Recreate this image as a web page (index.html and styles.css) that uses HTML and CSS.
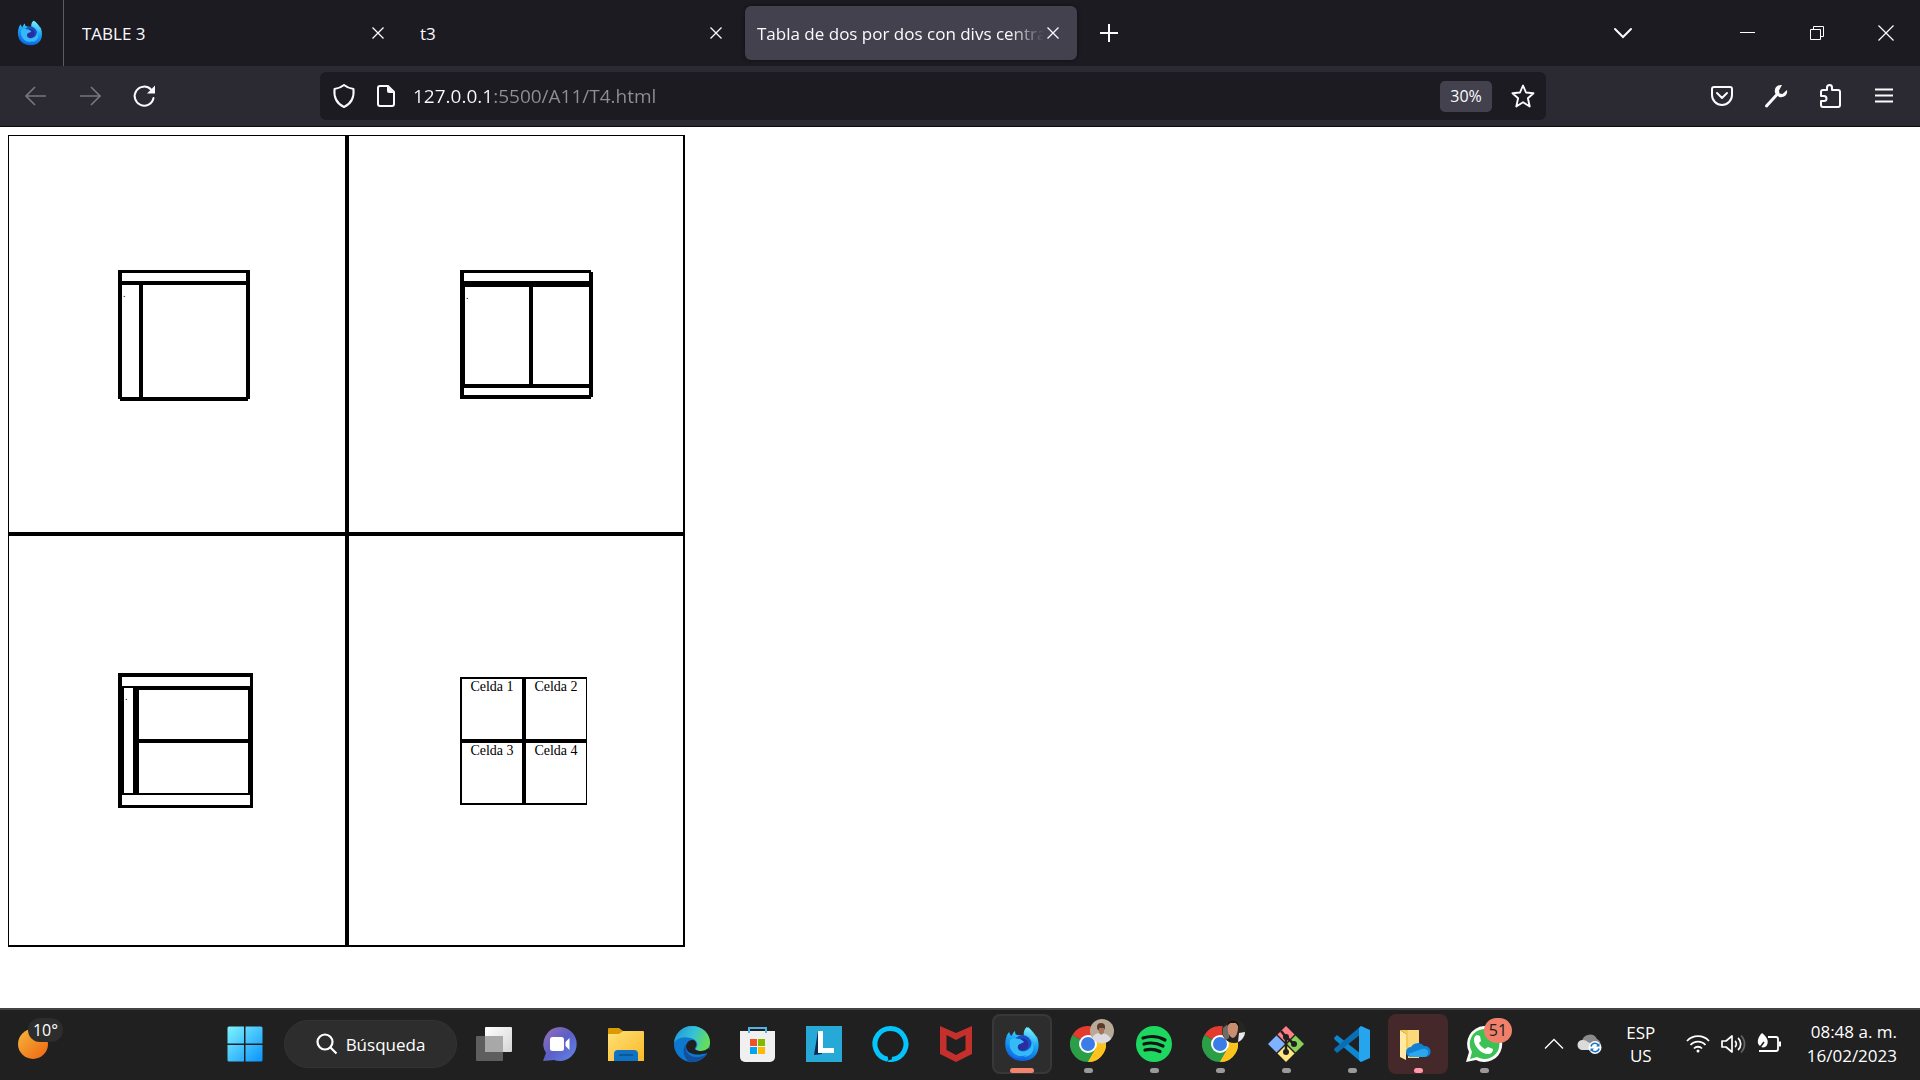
FILE: index.html
```html
<!DOCTYPE html>
<html lang="es">
<head>
<meta charset="utf-8">
<title>Tabla de dos por dos con divs centrados</title>
<link rel="stylesheet" href="styles.css">
</head>
<body>
<svg class="defs" aria-hidden="true">
  <defs>
    <linearGradient id="fxBody" x1=".7" y1="0" x2=".4" y2="1"><stop offset="0" stop-color="#5df0fb"/><stop offset=".45" stop-color="#1ba5f7"/><stop offset="1" stop-color="#0a5ede"/></linearGradient>
    <linearGradient id="fxFlame" x1=".5" y1="0" x2=".3" y2="1"><stop offset="0" stop-color="#7df6fb"/><stop offset="1" stop-color="#1596f4"/></linearGradient>
    <linearGradient id="winG" x1="0" y1="0" x2="1" y2="1"><stop offset="0" stop-color="#7ff3ff"/><stop offset="1" stop-color="#0a93fb"/></linearGradient>
    <linearGradient id="moonG" x1="0" y1="0" x2="1" y2="1"><stop offset="0" stop-color="#f6b73c"/><stop offset="1" stop-color="#ee6410"/></linearGradient>
    <linearGradient id="chatG" x1="0" y1="0" x2="1" y2="1"><stop offset="0" stop-color="#9a6fb5"/><stop offset=".5" stop-color="#5b5fc7"/><stop offset="1" stop-color="#6288e8"/></linearGradient>
    <linearGradient id="foldG" x1="0" y1="0" x2="1" y2="1"><stop offset="0" stop-color="#ffe07a"/><stop offset="1" stop-color="#fbb924"/></linearGradient>
    <linearGradient id="edgeTop" x1="0" y1=".3" x2="1" y2=".6"><stop offset="0" stop-color="#2397d8"/><stop offset=".5" stop-color="#35c3d6"/><stop offset="1" stop-color="#6be04a"/></linearGradient>
    <linearGradient id="viewG" x1="0" y1="0" x2="1" y2="1"><stop offset="0" stop-color="#fff"/><stop offset="1" stop-color="#d5d5d5"/></linearGradient>
    <symbol id="firefox" viewBox="0 0 36 36">
      <path fill="url(#fxBody)" d="M3 9l2-3 2 4c1 0 2-4 4-5 0 3 1 4 3 4l8 1c2 0 1-5 2-9 5 4 7 8 9 10 4 10 1 24-14 24C5 35-1 24 2 12z"/>
      <path fill="url(#fxFlame)" d="M20 10c-1-4 1-8 3-9 3 4 6 5 8 10 2 4 1 8-1 10 0-5-3-9-10-11z"/>
      <circle cx="18.500" cy="18" r="9" fill="#174fc9"/>
      <circle cx="18.500" cy="18.500" r="6" fill="#2b2d9e"/>
      <path fill="#35baf8" d="M6 14c4-3 7-1 10-1 2 1 3 2 4 3-2 2-5 1-6 4-1 4 3 6 7 5 5-1 7-6 7-9 4 7 0 15-9 15C9 31 4 22 6 14z"/>
      <path fill="#1677ec" d="M3 19c4 10 13 13 20 10-7 6-18 4-20-10z"/>
    </symbol>
    <symbol id="close" viewBox="0 0 14 14"><path d="M1.500 1.500l11 11M12.500 1.500l-11 11" fill="none" stroke="#fbfbfe" stroke-width="1.300"/></symbol>
    <symbol id="chrome" viewBox="0 0 36 36">
      <path fill="#e33b2e" d="M18 18L2.400 9A18 18 0 0 1 33.600 9z"/>
      <path fill="#fcc31e" d="M18 18L33.600 9A18 18 0 0 1 18 36z"/>
      <path fill="#2b9e48" d="M18 18l7.800 4.500L18 36A18 18 0 0 1 2.400 9z"/>
      <path fill="#fcc31e" d="M18 9h15.600A18 18 0 0 1 18 36l7.800-13.500z"/>
      <circle cx="18" cy="18" r="9" fill="#fff"/><circle cx="18" cy="18" r="7" fill="#3a7de8"/>
    </symbol>
  </defs>
</svg>

<header class="browser">
  <div class="tabstrip">
    <span class="brand"><svg width="26" height="26" aria-hidden="true"><use href="#firefox"/></svg></span>
    <div class="tab"><button class="tab-title">TABLE 3</button><button class="tab-close" aria-label="Cerrar TABLE 3"><svg width="14" height="14"><use href="#close"/></svg></button></div>
    <div class="tab"><button class="tab-title">t3</button><button class="tab-close" aria-label="Cerrar t3"><svg width="14" height="14"><use href="#close"/></svg></button></div>
    <div class="tab tab-active"><button class="tab-title">Tabla de dos por dos con divs centrados</button><button class="tab-close" aria-label="Cerrar pestaña"><svg width="14" height="14"><use href="#close"/></svg></button></div>
    <button class="new-tab" aria-label="Nueva pestaña"><svg width="18" height="18" viewBox="0 0 18 18"><path d="M9 0v18M0 9h18" stroke="#fbfbfe" stroke-width="2"/></svg></button>
    <button class="all-tabs" aria-label="Listar pestañas"><svg width="20" height="12" viewBox="0 0 20 12"><path d="M2 2l8 8 8-8" fill="none" stroke="#fbfbfe" stroke-width="2" stroke-linecap="round"/></svg></button>
    <div class="window-controls">
      <button aria-label="Minimizar"><svg width="16" height="16" viewBox="0 0 16 16"><path d="M0 7.500h15" stroke="#fff"/></svg></button>
      <button aria-label="Restaurar"><svg width="16" height="16" viewBox="0 0 16 16" fill="none" stroke="#fff"><path d="M1.500 4.500h10v10h-10zM4.500 4.500v-3h10v10h-3"/></svg></button>
      <button aria-label="Cerrar"><svg width="16" height="16" viewBox="0 0 16 16"><path d="M.5.500l15 15M15.500.500l-15 15" stroke="#fff" stroke-width="1.200"/></svg></button>
    </div>
  </div>
  <div class="toolbar">
    <div class="nav">
      <button aria-label="Atrás"><svg width="24" height="24" viewBox="0 0 24 24"><path d="M22 12H2M11 3l-9 9 9 9" fill="none" stroke="#77767f" stroke-width="1.700"/></svg></button>
      <button aria-label="Adelante"><svg width="24" height="24" viewBox="0 0 24 24"><path d="M2 12h20M13 3l9 9-9 9" fill="none" stroke="#77767f" stroke-width="1.700"/></svg></button>
      <button aria-label="Recargar"><svg width="24" height="24" viewBox="0 0 24 24"><path d="M19 5.500A9.500 9.500 0 1 0 21.500 14" fill="none" stroke="#fbfbfe" stroke-width="2" stroke-linecap="round"/><path d="M23 1.500v8h-8z" fill="#fbfbfe"/></svg></button>
    </div>
    <div class="urlbar">
      <svg width="24" height="26" viewBox="0 0 24 26" aria-hidden="true"><path d="M12 2c3 2.500 6 3.500 9.500 4 .8 8-2 14.500-9.500 18C4.500 20.500 1.700 14 2.500 6 6 5.500 9 4.500 12 2z" fill="none" stroke="#fbfbfe" stroke-width="2" stroke-linejoin="round"/></svg>
      <svg width="20" height="24" viewBox="0 0 20 24" aria-hidden="true"><path d="M4 2h8l6 6v12a2 2 0 0 1-2 2H4a2 2 0 0 1-2-2V4a2 2 0 0 1 2-2z" fill="none" stroke="#fbfbfe" stroke-width="2"/><path d="M11 2l7 7h-5a2 2 0 0 1-2-2z" fill="#fbfbfe"/></svg>
      <input class="url" type="text" aria-label="Dirección" value="127.0.0.1:5500/A11/T4.html">
      <button class="zoom-level">30%</button>
      <button class="star" aria-label="Marcador"><svg width="26" height="26" viewBox="0 0 26 26"><path d="M13 2.500l3 7 7.500.700-5.600 5 1.800 8.300L13 19.300l-6.700 4.200 1.800-8.300-5.600-5 7.500-.7z" fill="none" stroke="#fbfbfe" stroke-width="1.900" stroke-linejoin="round"/></svg></button>
    </div>
    <div class="tools">
      <button aria-label="Pocket"><svg width="24" height="24" viewBox="0 0 24 24" fill="none" stroke="#fbfbfe" stroke-width="2" stroke-linecap="round" stroke-linejoin="round"><path d="M4 3h16a2 2 0 0 1 2 2v6a10 10 0 0 1-20 0V5a2 2 0 0 1 2-2zM7 9l5 5 5-5"/></svg></button>
      <button aria-label="Herramientas"><svg width="24" height="24" viewBox="0 0 24 24"><path d="M2.500 22L13 10.500" stroke="#fbfbfe" stroke-width="3" stroke-linecap="round"/><path d="M18 1l-3 5.500.5 3 3 .5L23 6c1 5-3 8-8 7l-4-4c-1-5 2-8.500 7-8z" fill="#fbfbfe"/></svg></button>
      <button aria-label="Extensiones"><svg width="24" height="26" viewBox="0 0 24 26"><path d="M3 9.500V9a2 2 0 0 1 2-2h4V4.500a2.500 2.500 0 0 1 5 0V7h6a2 2 0 0 1 2 2v13a2 2 0 0 1-2 2H5a2 2 0 0 1-2-2v-4h3a2.500 2.500 0 0 0 0-5H3z" fill="none" stroke="#fbfbfe" stroke-width="2" stroke-linejoin="round"/></svg></button>
      <button aria-label="Menú"><svg width="18" height="16" viewBox="0 0 18 16"><path d="M0 1.500h18M0 7.500h18M0 13.500h18" stroke="#fbfbfe" stroke-width="2"/></svg></button>
    </div>
  </div>
</header>

<main class="page">
  <div class="board">
    <section class="quad quad-a">
      <div class="sketch-side">
        <div class="frame"><div class="pane"></div><div class="cols"><div class="pane dot">.</div><div class="pane"></div></div></div>
        <div class="base"></div>
      </div>
    </section>
    <section class="quad quad-b">
      <div class="sketch-two">
        <div class="frame"><div class="pane"></div><div class="cols"><div class="pane dot">.</div><div class="pane"></div></div><div class="pane"></div></div>
        <div class="edge"></div>
      </div>
    </section>
    <section class="quad quad-c">
      <div class="sketch-full">
        <div class="pane"></div>
        <div class="cols"><div class="pane dot">.</div><div class="rows"><div class="pane"></div><div class="pane"></div></div></div>
        <div class="pane"></div>
      </div>
    </section>
    <section class="quad quad-d">
      <table class="cells">
        <tr><td>Celda 1</td><td>Celda 2</td></tr>
        <tr><td>Celda 3</td><td>Celda 4</td></tr>
      </table>
    </section>
  </div>
</main>

<footer class="taskbar">
  <button class="weather" aria-label="Clima, 10 grados"><svg width="30" height="30" viewBox="0 0 30 30"><circle cx="15" cy="15" r="15" fill="url(#moonG)"/></svg><span class="temp">10°</span></button>
  <div class="apps">
    <button class="app" aria-label="Inicio"><svg class="ico" viewBox="0 0 36 36"><path fill="url(#winG)" d="M2 .5h15v17H.5V2A1.500 1.500 0 0 1 2 .5zM18.500.500H34A1.500 1.500 0 0 1 35.500 2v15.500h-17zM.5 19H17v16.500H2A1.500 1.500 0 0 1 .5 34zM18.500 19h17v15a1.500 1.500 0 0 1-1.500 1.500H18.500z"/></svg></button>
    <button class="search"><svg width="22" height="22" viewBox="0 0 22 22" fill="none" stroke="#fff" stroke-width="2.200"><circle cx="9" cy="9" r="7.500"/><path d="M14.500 14.500l6 6"/></svg>Búsqueda</button>
    <button class="app" aria-label="Vista de tareas"><svg class="ico" viewBox="0 0 36 36"><rect x="9" y="1" width="27" height="25" rx="1" fill="url(#viewG)"/><rect y="10" width="27" height="25" rx="1" fill="#5e5e5e"/><path d="M9 10h18v16H9z" fill="#a8a8a8"/></svg></button>
    <button class="app" aria-label="Chat"><svg class="ico" viewBox="0 0 36 36"><path fill="url(#chatG)" d="M18 1a17 17 0 1 1-6 33l-11 1 3-8A17 17 0 0 1 18 1z"/><rect x="8" y="11" width="14" height="14" rx="2.500" fill="#fff"/><path d="M23.500 16l4-4v12l-4-4z" fill="#fff"/></svg></button>
    <button class="app" aria-label="Explorador"><svg class="ico" viewBox="0 0 36 36"><path d="M0 3a1 1 0 0 1 1-1h10l4 3-3 5H0z" fill="#d99a06"/><path d="M0 8h11l4-3h20a1 1 0 0 1 1 1v29H0z" fill="url(#foldG)"/><path d="M6 35V28a4 4 0 0 1 4-4h16a4 4 0 0 1 4 4v7z" fill="#0f72c2"/><path d="M11 29h14" stroke="#0b4f8c" stroke-width="1.500"/></svg></button>
    <button class="app" aria-label="Edge"><svg class="ico" viewBox="0 0 36 36"><circle cx="18" cy="18" r="18" fill="#0d78cf"/><path fill="url(#edgeTop)" d="M0 17C1 7 9 0 18 0c11 0 18 8 18 16 0 6-4 9-9 9-4 0-6-2-5-3 3-3 1-9-6-10C9 10 3 12 0 17z"/><path d="M12 20c1-4 3-6 7-6 4 1 4 6 2 8-1 1 1 3 6 3 3 0 5-1 8-3v5l-6 1c-9 2-17-1-17-8z" fill="#202020"/><path fill="#124f9c" d="M12 18c-2 8 4 14 12 13 5 0 8-3 9-4-4 7-11 10-18 9-6-5-7-13-3-18z"/></svg></button>
    <button class="app" aria-label="Microsoft Store"><svg class="ico" viewBox="0 0 36 36"><path d="M9 7V2h17v5" fill="none" stroke="#4fb4e4" stroke-width="2"/><path d="M0 5h35v26a5 5 0 0 1-5 5H5a5 5 0 0 1-5-5z" fill="#f0f0f0"/><path d="M9 7V5M26 7V5" stroke="#4fb4e4" stroke-width="2"/><path d="M10 13h7v7h-7z" fill="#f05125"/><path d="M18 13h7v7h-7z" fill="#7fba00"/><path d="M10 21h7v7h-7z" fill="#00a4ef"/><path d="M18 21h7v7h-7z" fill="#ffb900"/></svg></button>
    <button class="app" aria-label="Lector"><svg class="ico" viewBox="0 0 36 36"><path d="M0 0h36v36H0z" fill="#27a9d8"/><path d="M12 5L8 29l8-1z" fill="#0c2a55"/><path d="M12 5h5v17h11v5H12z" fill="#fff"/></svg></button>
    <button class="app" aria-label="Alexa"><svg class="ico" viewBox="0 0 36 36"><path d="M15.500 33.200A15.500 15.500 0 1 1 20 33.400" fill="none" stroke="#05c3fb" stroke-width="5"/><path d="M13 30c3 1 4 3 3 6M16 36c0-2 4-3 8-4l-4 4z" fill="#05c3fb"/></svg></button>
    <button class="app" aria-label="McAfee"><svg class="ico" viewBox="0 0 36 36"><path d="M2 0l16 7 16-7v28l-16 8-16-8zM8.500 9v15l9.500 5 9.500-5V9L18 14z" fill="#c5302d" fill-rule="evenodd"/></svg></button>
    <button class="app app-on" aria-label="Firefox"><svg class="ico" viewBox="0 0 36 36"><use href="#firefox"/></svg><i class="run run-wide"></i></button>
    <button class="app" aria-label="Chrome"><svg class="ico" viewBox="0 0 36 36"><use href="#chrome"/><circle cx="32" cy="5" r="12" fill="#b9aa98"/><path d="M22 12c2-4 5-5 9-5s8 2 10 6c-5 6-14 6-19-1z" fill="#dcdbe2"/><circle cx="31" cy="1" r="4" fill="#5a3a2d"/><path d="M29 2h5v5l-3 2-2-2z" fill="#a8755b"/></svg><i class="run"></i></button>
    <button class="app" aria-label="Spotify"><svg class="ico" viewBox="0 0 36 36"><circle cx="18" cy="18" r="18" fill="#1ed760"/><path d="M7 12c8-2.500 16-1.500 22 2M8 18c7-2 13-1 19 2M9 24c6-1.500 10-1 15 1.500" fill="none" stroke="#151515" stroke-width="3.200" stroke-linecap="round"/></svg><i class="run"></i></button>
    <button class="app" aria-label="Chrome, segundo perfil"><svg class="ico" viewBox="0 0 36 36"><use href="#chrome"/><circle cx="32" cy="5" r="12" fill="#262524"/><path d="M21 2l6-5v15l-3 2c-3-3-4-8-3-12z" fill="#716b66"/><path d="M37 7l6-1c0 5-4 9-7 10z" fill="#e8e8e8"/><path d="M26 0c1-5 10-5 10 1 0 6-2 10-5 11-4-1-6-6-5-12z" fill="#c98d70"/><path d="M25 0c0-7 12-8 12 1l-3-4h-6z" fill="#17110f"/></svg><i class="run"></i></button>
    <button class="app" aria-label="Git"><svg class="ico" viewBox="0 0 36 36"><path d="M18 0l8.500 8.500L18 17 9.500 8.500z" fill="#ff7f86"/><path d="M0 18l8.500-8.500L17 18l-8.500 8.500z" fill="#80b3ff"/><path d="M36 18l-8.500-8.500L19 18l8.500 8.500z" fill="#87d158"/><path d="M18 36l8.500-8.500L18 19l-8.500 8.500z" fill="#ffe680"/><path d="M13 5l5 6v15M18 11l8 7" fill="none" stroke="#202020" stroke-width="2.500"/><circle cx="18" cy="11" r="3" fill="#202020"/><circle cx="26" cy="18" r="3" fill="#202020"/><circle cx="18" cy="26" r="3" fill="#202020"/></svg><i class="run"></i></button>
    <button class="app" aria-label="Visual Studio Code"><svg class="ico" viewBox="0 0 36 36"><path d="M0 12l3-3 24 19v8L1 14z" fill="#0f87d0"/><path d="M0 24l3 3 24-19V0L1 22z" fill="#0a6eb4"/><path d="M27 0l9 4v28l-9 4-2-2V2z" fill="#26a5ee"/></svg><i class="run"></i></button>
    <button class="app app-alert" aria-label="OneDrive"><svg class="ico" viewBox="0 0 36 36"><path d="M8 4h11v28H8z" fill="#fbd87a"/><path d="M0 4l6 4v26l-6-3z" fill="#ffe9a3"/><path d="M0 4h8v20l-2 4V8z" fill="#f5c85a"/><path d="M11 31a5 5 0 0 1 0-10 8 8 0 0 1 13-1 5 5 0 0 1 2 11z" fill="#1181d6"/><path d="M8 28l14-5c5-1 6 2 6 4s-2 4-4 4H11z" fill="#2ba7f0"/></svg><i class="run run-pink"></i></button>
    <button class="app" aria-label="WhatsApp, 51 mensajes"><svg class="ico" viewBox="0 0 36 36"><path d="M18 0a18 18 0 1 1-8 34L0 36l3-10A18 18 0 0 1 18 0z" fill="#fff"/><path d="M18 3a15 15 0 1 1-7 28l-7 2 2-7A15 15 0 0 1 18 3z" fill="#3cc254"/><path d="M11 9l3 1 1 5-2 2c1 3 4 5 6 6l3-2 5 2c0 3-2 5-5 5C15 28 8 20 8 14c0-3 1-4 3-5z" fill="#fff"/></svg><span class="badge">51</span><i class="run"></i></button>
  </div>
  <div class="tray">
    <button class="tray-item" aria-label="Mostrar ocultos"><svg width="18" height="10" viewBox="0 0 18 10"><path d="M0 9.500l9-9 9 9" fill="none" stroke="#fff" stroke-width="1.300"/></svg></button>
    <button class="tray-item" aria-label="OneDrive"><svg width="26" height="20" viewBox="0 0 26 20"><path d="M5 16a5 5 0 0 1 0-9A8 8 0 0 1 20 5a6 6 0 0 1 0 11z" fill="#8b8b8b"/><path d="M5 16a5 5 0 0 1 1-10c4 0 5 3 7 3l7 7z" fill="#dadada"/><circle cx="18" cy="13.500" r="6.500" fill="#fff"/><path d="M14 12.500a4 4 0 0 1 7.500-1M22 14.500a4 4 0 0 1-7.500 1" fill="none" stroke="#1a73c8" stroke-width="1.500"/><path d="M22.500 9v3.500H19zM13.500 18v-3.500H17z" fill="#1a73c8"/></svg></button>
    <button class="lang">ESP<br>US</button>
    <button class="quick" aria-label="Red, sonido y batería">
      <svg width="24" height="20" viewBox="0 0 24 20" fill="none" stroke="#fff" stroke-width="1.800"><path d="M1 7a15 15 0 0 1 22 0M4.500 11a10 10 0 0 1 15 0M8 14.500a5.500 5.500 0 0 1 8 0"/><circle cx="12" cy="17" r="1.500" fill="#fff" stroke="none"/></svg>
      <svg width="24" height="20" viewBox="0 0 24 20" fill="none" stroke="#fff" stroke-width="1.700"><path d="M1 7h4l6-5v16l-6-5H1z" stroke-linejoin="round"/><path d="M14 7a4 4 0 0 1 0 6M17 4a8 8 0 0 1 0 12"/><path d="M20 1.500a12 12 0 0 1 0 17" stroke="#666"/></svg>
      <svg width="26" height="22" viewBox="0 0 26 22"><path d="M12 4h8a2 2 0 0 1 2 2v10a2 2 0 0 1-2 2H3" fill="none" stroke="#fff" stroke-width="1.800"/><path d="M23 8.500h2v5h-2z" fill="#fff"/><path d="M6 0c5 4 7 8 5 12-1 3-6 3-7 1-4-3-2-9 2-13z" fill="#fff"/><path d="M2 17l6-8" stroke="#202020" stroke-width="1.500"/></svg>
    </button>
    <button class="clock">08:48 a. m.<br>16/02/2023</button>
  </div>
</footer>
</body>
</html>
```
FILE: styles.css
```css
* { box-sizing: border-box; }
body {
  margin: 0;
  min-height: 100vh;
  display: flex;
  flex-direction: column;
  background: #fff;
  font-family: "Open Sans", "Noto Sans", sans-serif;
}
button {
  padding: 0;
  border: 0;
  background: none;
  color: inherit;
  font: inherit;
  display: flex;
  align-items: center;
  justify-content: center;
}
svg { flex: none; display: block; overflow: visible; }
.defs { position: absolute; width: 0; height: 0; }

/* Browser chrome */
.browser { background: #2b2a33; color: #fbfbfe; border-bottom: 1px solid #0c0c0d; }
.tabstrip { display: flex; align-items: center; height: 66px; background: #1c1b22; font-size: 17px; }
.brand { width: 64px; height: 66px; padding-left: 17px; border-right: 1px solid #5b5b66; display: flex; align-items: center; }
.tab { display: flex; align-items: center; width: 332px; height: 54px; margin-left: 6px; padding: 0 15px 0 12px; border-radius: 6px; }
.tab-active { margin-left: 5px; background: #42414d; box-shadow: 0 0 4px #0008; }
.tab-title { flex: 1; min-width: 0; overflow: hidden; white-space: nowrap; justify-content: flex-start; }
.tab-active .tab-title { -webkit-mask-image: linear-gradient(90deg, #000 88%, transparent); mask-image: linear-gradient(90deg, #000 88%, transparent); }
.tab-close { width: 18px; height: 30px; }
.new-tab { width: 54px; height: 54px; margin-left: 5px; }
.all-tabs { width: 54px; height: 54px; margin-left: auto; margin-right: 63px; }
.window-controls { display: flex; }
.window-controls button { width: 69px; height: 66px; }

.toolbar { display: flex; align-items: center; height: 60px; padding: 0 9px; }
.nav, .tools { display: flex; }
.nav button, .tools button { width: 54px; height: 48px; }
.urlbar { display: flex; align-items: center; flex: 1; height: 48px; margin: 0 149px; padding: 0 10px 0 12px; background: #1c1b22; border-radius: 6px; }
.urlbar svg + svg { margin-left: 20px; }
.url {
  flex: 1;
  min-width: 0;
  margin-left: 17px;
  padding: 0;
  border: 0;
  outline: 0;
  height: 32px;
  font: 19px "Open Sans", "Noto Sans", sans-serif;
  color: transparent;
  background: linear-gradient(90deg, #fbfbfe 79px, #8f8f98 79px);
  -webkit-background-clip: text;
  background-clip: text;
}
.zoom-level { width: 52px; height: 31px; border-radius: 5px; background: #42414d; font-size: 16px; margin-right: 18px; }

/* Page content */
.page { flex: 1; padding: 8px; }
.board {
  display: grid;
  grid-template-columns: 336px 334px;
  grid-template-rows: 396px 409px;
  gap: 4px;
  width: max-content;
  border: solid #000;
  border-width: 1px 2px 2px 1px;
  background: #000;
}
.quad { background: #fff; display: flex; align-items: flex-start; }
.quad-a { padding: 134px 0 0 109px; }
.quad-b { padding: 134px 0 0 111px; }
.quad-c { padding: 137px 0 0 109px; }
.quad-d { padding: 141px 0 0 111px; }
.pane { background: #fff; }
.dot { padding-left: 1px; font: 10px/18px "Liberation Serif", serif; }

.sketch-side { width: 132px; }
.sketch-side .frame { display: grid; grid-template-rows: 8px 112px; gap: 4px; padding: 3px 4px 2px; background: #000; }
.sketch-side .cols { display: grid; grid-template-columns: 17px 1fr; gap: 4px; }
.sketch-side .base { height: 2px; margin: 0 2px; background: #000; }

.sketch-two { display: flex; align-items: center; }
.sketch-two .frame { display: grid; grid-template-rows: 10px 97px 7px; row-gap: 4px; width: 131px; padding: 3px 2px 4px 4px; background: #000; }
.sketch-two .cols { display: grid; grid-template-columns: 64px 56px; gap: 4px; padding-left: 1px; }
.sketch-two .frame > .pane:first-child { border-bottom: 2px solid #000; }
.sketch-two .edge { width: 2px; height: 125px; background: #000; }

.sketch-full { display: grid; grid-template-rows: 9px 105px 10px; row-gap: 2px; width: 135px; padding: 4px 3px 3px 4px; background: #000; }
.sketch-full .cols { display: grid; grid-template-columns: 9px 109px; column-gap: 6px; padding-left: 2px; }
.sketch-full .rows { display: grid; grid-template-rows: 49px 50px; row-gap: 4px; padding-top: 2px; }

.cells { border-collapse: separate; border-spacing: 0; border: 2px solid #000; border-right-width: 1px; background: #000; }
.cells td { width: 60px; height: 60px; padding: 0; background: #fff; vertical-align: top; text-align: center; font: 14px/16px "Liberation Serif", serif; }
.cells td + td { width: 64px; border-left: 4px solid #000; }
.cells tr + tr td { height: 64px; border-top: 4px solid #000; }

/* Taskbar */
.taskbar { display: flex; height: 72px; padding-bottom: 2px; background: #202020; border-top: 2px solid #444; color: #fff; font-size: 18px; }
.weather { position: relative; width: 212px; justify-content: flex-start; padding-left: 18px; }
.temp { position: absolute; left: 28px; top: 8px; width: 35px; height: 24px; border-radius: 12px; background: #2d2d2d; font-size: 16px; line-height: 24px; }
.apps { display: flex; align-items: center; }
.app { position: relative; width: 60px; height: 60px; margin: 0 3px; border-radius: 8px; }
.ico { width: 36px; height: 36px; }
.app-on { background: #2d2d2d; border: 2px solid #383838; }
.app-alert { background: #44282a; }
.search { width: 173px; height: 48px; gap: 8px; margin: 0 4px 0 6px; border-radius: 24px; background: #2d2d2d; border: 1px solid #333; font-size: 17px; }
.run { position: absolute; bottom: 1px; left: 50%; width: 9px; height: 5px; margin-left: -4px; border-radius: 3px; background: #9a9a9a; }
.run-wide { width: 24px; margin-left: -12px; bottom: -1px; background: #f0846c; }
.run-pink { background: #ff99a8; }
.badge { position: absolute; left: 30px; top: 4px; width: 28px; height: 25px; border-radius: 13px; background: #f0806a; color: #202020; font-size: 16px; line-height: 25px; }

.tray { display: flex; align-items: center; margin-left: auto; padding-right: 23px; }
.tray-item { width: 36px; height: 60px; }
.lang { width: 66px; font-size: 17px; line-height: 23px; }
.quick { gap: 11px; margin-left: 12px; height: 60px; }
.clock { margin-left: 25px; font-size: 17px; line-height: 24px; text-align: right; }
```
